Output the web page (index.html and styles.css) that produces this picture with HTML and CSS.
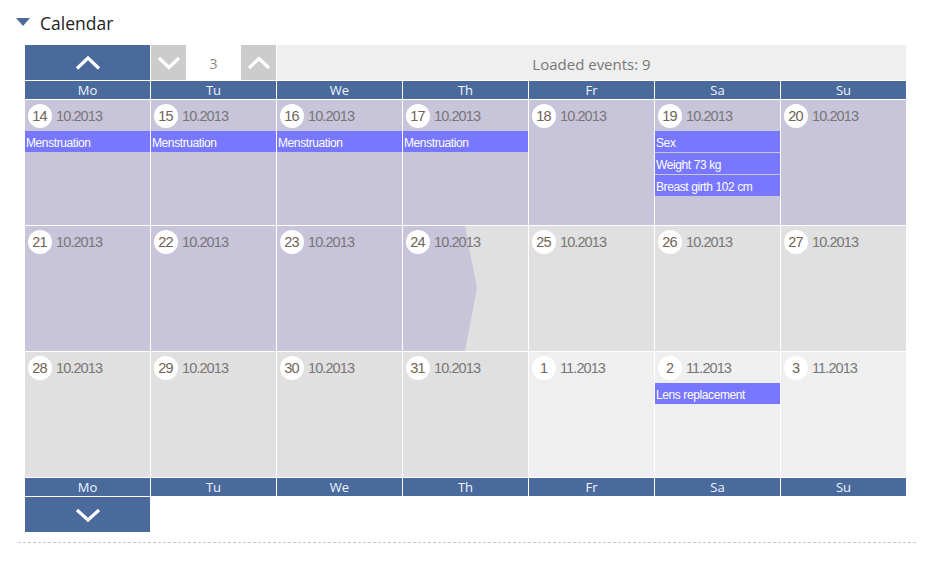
FILE: index.html
```html
<!DOCTYPE html>
<html>
<head>
<meta charset="utf-8">
<link rel="stylesheet" href="styles.css">
</head>
<body>
<div class="page">
  <div class="title"><span class="tri"></span><span class="title-text">Calendar</span></div>
  <div class="cal">
    <div class="topbar">
      <div class="btn-blue"><svg width="26" height="14" viewBox="0 0 26 14"><polyline points="2,12.5 13,2 24,12.5" fill="none" stroke="#fff" stroke-width="3.2"/></svg></div>
      <div class="pager">
        <div class="btn-gray"><svg width="24" height="14" viewBox="0 0 24 14"><polyline points="2,2 12,11.5 22,2" fill="none" stroke="#fff" stroke-width="3.2"/></svg></div>
        <div class="pnum">3</div>
        <div class="btn-gray"><svg width="24" height="14" viewBox="0 0 24 14"><polyline points="2,12 12,2.5 22,12" fill="none" stroke="#fff" stroke-width="3.2"/></svg></div>
      </div>
      <div class="loaded">Loaded events: 9</div>
    </div>
    <div class="wd">Mo</div><div class="wd">Tu</div><div class="wd">We</div><div class="wd">Th</div><div class="wd">Fr</div><div class="wd">Sa</div><div class="wd">Su</div>

    <div class="cell p"><div class="dl"><span class="dn">14</span>10.2013</div><div class="ev">Menstruation</div></div>
    <div class="cell p"><div class="dl"><span class="dn">15</span>10.2013</div><div class="ev">Menstruation</div></div>
    <div class="cell p"><div class="dl"><span class="dn">16</span>10.2013</div><div class="ev">Menstruation</div></div>
    <div class="cell p"><div class="dl"><span class="dn">17</span>10.2013</div><div class="ev">Menstruation</div></div>
    <div class="cell p"><div class="dl"><span class="dn">18</span>10.2013</div></div>
    <div class="cell p"><div class="dl"><span class="dn">19</span>10.2013</div><div class="ev">Sex</div><div class="ev">Weight 73 kg</div><div class="ev">Breast girth 102 cm</div></div>
    <div class="cell p"><div class="dl"><span class="dn">20</span>10.2013</div></div>

    <div class="cell p"><div class="dl"><span class="dn">21</span>10.2013</div></div>
    <div class="cell p"><div class="dl"><span class="dn">22</span>10.2013</div></div>
    <div class="cell p"><div class="dl"><span class="dn">23</span>10.2013</div></div>
    <div class="cell g arrow"><div class="dl"><span class="dn">24</span>10.2013</div></div>
    <div class="cell g"><div class="dl"><span class="dn">25</span>10.2013</div></div>
    <div class="cell g"><div class="dl"><span class="dn">26</span>10.2013</div></div>
    <div class="cell g"><div class="dl"><span class="dn">27</span>10.2013</div></div>

    <div class="cell g"><div class="dl"><span class="dn">28</span>10.2013</div></div>
    <div class="cell g"><div class="dl"><span class="dn">29</span>10.2013</div></div>
    <div class="cell g"><div class="dl"><span class="dn">30</span>10.2013</div></div>
    <div class="cell g"><div class="dl"><span class="dn">31</span>10.2013</div></div>
    <div class="cell l"><div class="dl"><span class="dn">1</span>11.2013</div></div>
    <div class="cell l"><div class="dl"><span class="dn">2</span>11.2013</div><div class="ev">Lens replacement</div></div>
    <div class="cell l"><div class="dl"><span class="dn">3</span>11.2013</div></div>

    <div class="wd">Mo</div><div class="wd">Tu</div><div class="wd">We</div><div class="wd">Th</div><div class="wd">Fr</div><div class="wd">Sa</div><div class="wd">Su</div>
    <div class="btn-blue down"><svg width="26" height="14" viewBox="0 0 26 14"><polyline points="2,2 13,12 24,2" fill="none" stroke="#fff" stroke-width="3.2"/></svg></div>
  </div>
  <div class="sep"></div>
</div>
</body>
</html>
```

FILE: styles.css
```css
html, body { margin: 0; padding: 0; background: #fff; }
.page { padding-top: 11px; }
.title { display: flex; align-items: center; margin-left: 16px; height: 24px; }
.tri { width: 0; height: 0; border-left: 7px solid transparent; border-right: 7px solid transparent; border-top: 8px solid #4a6a9c; margin-right: 10px; margin-top: -2px; }
.title-text { font-family: "Open Sans", sans-serif; font-size: 17.5px; color: #222; }
.cal { margin: 10px 0 0 25px; width: 881px; display: grid; grid-template-columns: repeat(7, 125px); column-gap: 1px; row-gap: 1px; }
.topbar { grid-column: 1 / 8; display: grid; grid-template-columns: 125px 125px 1fr; column-gap: 1px; height: 35px; }
.btn-blue { background: #4a6a9c; height: 35px; display: flex; align-items: center; justify-content: center; }
.btn-blue svg { display: block; }
.btn-blue.down { grid-column: 1; }
.pager { display: flex; }
.btn-gray { width: 35px; height: 35px; background: #cccccc; display: flex; align-items: center; justify-content: center; }
.pnum { flex: 1; display: flex; align-items: center; justify-content: center; padding-top: 2px; font-family: "Open Sans", sans-serif; font-size: 14px; color: #888; }
.loaded { background: #efefef; display: flex; align-items: center; justify-content: center; padding-top: 3px; font-family: "Open Sans", sans-serif; font-size: 15px; color: #777; }
.wd { background: #4a6a9c; color: #eef4ff; height: 18px; line-height: 19px; text-align: center; font-family: "Open Sans", sans-serif; font-size: 13px; }
.cell { height: 125px; position: relative; font-family: "Liberation Sans", Arial, sans-serif; }
.cell.p { background: #c8c4da; }
.cell.g { background: #e0e0e0; }
.cell.l { background: #efefef; }
.cell.arrow::before { content: ""; position: absolute; left: 0; top: 0; width: 75px; height: 125px; background: #c8c4da; clip-path: polygon(0 0, 62px 0, 74px 62px, 62px 125px, 0 125px); }
.dl { position: relative; display: flex; align-items: center; padding: 4px 0 0 3px; height: 24px; font-size: 14.5px; letter-spacing: -0.9px; color: #777; }
.dn { width: 24px; height: 24px; border-radius: 50%; background: #fff; display: flex; align-items: center; justify-content: center; margin-right: 4px; color: #6f6455; letter-spacing: -0.9px; padding-right: 1px; box-sizing: border-box; }
.ev { position: relative; background: #7777ff; color: #fff; font-size: 12px; letter-spacing: -0.4px; height: 21px; line-height: 18px; padding-top: 3px; box-sizing: border-box; padding-left: 1px; margin-bottom: 1px; white-space: nowrap; }
.dl + .ev { margin-top: 3px; }
.sep { margin: 10px 22px 0 18px; border-top: 1px dashed #c8c8c8; }
```
